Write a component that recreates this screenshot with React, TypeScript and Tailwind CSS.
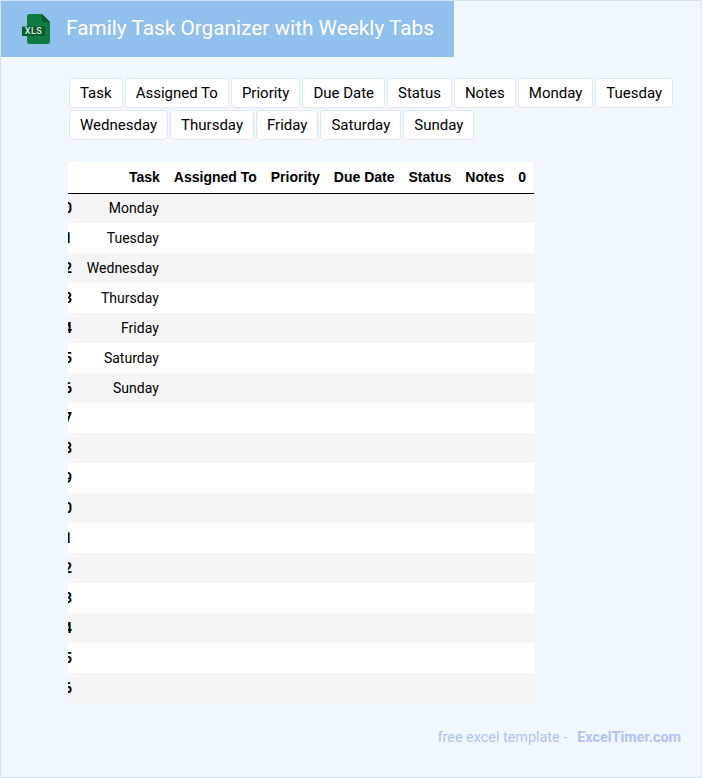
const headers = ["Task", "Assigned To", "Priority", "Due Date", "Status", "Notes", "Monday", "Tuesday", "Wednesday", "Thursday", "Friday", "Saturday", "Sunday"];
const days = ["Monday", "Tuesday", "Wednesday", "Thursday", "Friday", "Saturday", "Sunday"];
const cols = ["Assigned To", "Priority", "Due Date", "Status", "Notes", "0"];
const rows = Array.from({ length: 17 }, (_, i) => i);

function Logo() {
  return (
    <svg width="30" height="30" viewBox="0 0 30 30" className="block">
      <path d="M7 2.5a2.5 2.5 0 0 1 2.5-2.5H22l8 8v19.5a2.5 2.5 0 0 1-2.5 2.5h-18A2.5 2.5 0 0 1 7 27.5z" fill="#0f7a41" />
      <path d="M22 0l8 8h-5.5a2.5 2.5 0 0 1-2.5-2.5z" fill="#0a5c30" />
      <rect x="2" y="12.5" width="23" height="9.5" fill="#0a5c30" />
      <text x="13.5" y="20.3" textAnchor="middle" fontSize="9" fontWeight="500" fill="#dcefe3" fontFamily="Roboto, sans-serif" letterSpacing="0.5">XLS</text>
    </svg>
  );
}

export default function App() {
  return (
    <div className="w-[702px] h-[778px] bg-[#f0f7ff] border border-[#d5e3f1] flex flex-col font-['Roboto',sans-serif] text-black overflow-hidden">
      <header className="w-[453px] h-[56px] bg-[#92c0ec] flex items-center pl-[19px] shrink-0">
        <Logo />
        <h1 className="ml-[16px] text-[20.8px] leading-[28px] -mt-[2px] font-normal text-white">Family Task Organizer with Weekly Tabs</h1>
      </header>
      <nav className="mt-[21px] ml-[68px] mr-6 flex flex-wrap gap-x-[2px] gap-y-[2px]">
        {headers.map((h) => (
          <button key={h} className="h-[30px] px-[10px] bg-white border border-[#dbe7f3] rounded-[4px] text-[15px] leading-none">
            {h}
          </button>
        ))}
      </nav>
      <div className="mt-[22px] ml-[67px] w-[466px] overflow-hidden">
        <table className="border-collapse text-[14px] -ml-[14px] whitespace-nowrap">
          <thead>
            <tr className="h-[31px] border-b border-black">
              <th className="w-[18px] bg-white"></th>
              <th className="w-[95px] pr-[7px] text-right font-bold font-['Liberation_Sans',sans-serif] bg-white">Task</th>
              {cols.map((c) => (
                <th key={c} className="px-[7px] text-right font-bold font-['Liberation_Sans',sans-serif] bg-white">{c}</th>
              ))}
              <th className="w-[1px] p-0"></th>
            </tr>
          </thead>
          <tbody>
            {rows.map((i) => (
              <tr key={i} className={`h-[30px] ${i % 2 === 0 ? "bg-[#f5f5f5]" : "bg-white"}`}>
                <td className="w-[18px] text-right font-bold">{i}</td>
                <td className="pr-[8px] text-right">{days[i] ?? ""}</td>
                {cols.map((c) => (
                  <td key={c}></td>
                ))}
                <td className="w-[1px] p-0"></td>
              </tr>
            ))}
          </tbody>
        </table>
      </div>
      <footer className="mt-[24px] mr-[20px] flex justify-end text-[14.4px] text-[#b0c4f2]">
        <span>free excel template -</span>
        <span className="ml-[10px] font-bold">ExcelTimer.com</span>
      </footer>
    </div>
  );
}
